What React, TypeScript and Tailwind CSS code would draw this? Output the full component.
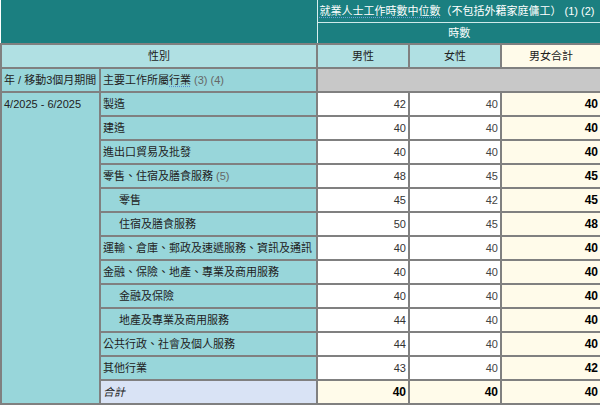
import React from "react";

type Row = { label: string; note?: string; indent?: boolean; m: number; f: number; t: number };

const rows: Row[] = [
  { label: "製造", m: 42, f: 40, t: 40 },
  { label: "建造", m: 40, f: 40, t: 40 },
  { label: "進出口貿易及批發", m: 40, f: 40, t: 40 },
  { label: "零售、住宿及膳食服務", note: "(5)", m: 48, f: 45, t: 45 },
  { label: "零售", indent: true, m: 45, f: 42, t: 45 },
  { label: "住宿及膳食服務", indent: true, m: 50, f: 45, t: 48 },
  { label: "運輸、倉庫、郵政及速遞服務、資訊及通訊", m: 40, f: 40, t: 40 },
  { label: "金融、保險、地產、專業及商用服務", m: 40, f: 40, t: 40 },
  { label: "金融及保險", indent: true, m: 40, f: 40, t: 40 },
  { label: "地產及專業及商用服務", indent: true, m: 44, f: 40, t: 40 },
  { label: "公共行政、社會及個人服務", m: 44, f: 40, t: 40 },
  { label: "其他行業", m: 43, f: 40, t: 42 },
];

const cell = "border-2 border-[#808080] p-0";

export default function App() {
  return (
    <div
      className="w-[600px] h-[406px] overflow-hidden bg-white text-[11px] leading-[14px] text-[#222]"
      style={{ fontFamily: '"Liberation Sans", Arial, "Noto Sans CJK TC", sans-serif' }}
    >
      <table className="table-fixed border-collapse w-[600px]">
        <colgroup>
          <col className="w-[99px]" />
          <col className="w-[217px]" />
          <col className="w-[92px]" />
          <col className="w-[92px]" />
          <col className="w-[100px]" />
        </colgroup>
        <tbody>
          <tr className="h-[22px]">
            <td colSpan={2} rowSpan={2} className="bg-[#1b7f80] border-r border-r-[#d8eeee] border-b-2 border-b-[#808080] p-0"></td>
            <td colSpan={3} className="bg-[#1b7f80] border-b border-b-[#cfeaea] text-white pl-[2px] whitespace-nowrap">
              <span className="underline decoration-dotted decoration-[#6aa0d8] underline-offset-2">就業人士工作時數中位數</span>（不包括外籍家庭傭工） (1) (2)
            </td>
          </tr>
          <tr className="h-[22px]">
            <td colSpan={3} className="bg-[#1b7f80] border-b-2 border-b-[#808080] text-white text-center">時數</td>
          </tr>
          <tr className="h-[24px]">
            <td colSpan={2} className={`${cell} bg-[#b0e0e3] text-center`}>性別</td>
            <td className={`${cell} bg-[#b0e0e3] text-center`}>男性</td>
            <td className={`${cell} bg-[#b0e0e3] text-center`}>女性</td>
            <td className={`${cell} bg-[#fffbea] text-center`}>男女合計</td>
          </tr>
          <tr className="h-[24px]">
            <td className={`${cell} bg-[#98d6da] pl-[2px] whitespace-nowrap`}>年 / 移動3個月期間</td>
            <td className={`${cell} bg-[#98d6da] pl-[2px]`}>
              主要工作所屬<span className="underline decoration-dotted decoration-[#5a8fd0] underline-offset-2">行業</span>{" "}
              <span className="text-[#666]">(3) (4)</span>
            </td>
            <td colSpan={3} className={`${cell} bg-[#c8c8c8]`}></td>
          </tr>
          {rows.map((r, i) => (
            <tr key={i} className="h-[24px]">
              {i === 0 && (
                <td rowSpan={13} className={`${cell} bg-[#98d6da] align-top pl-[2px] pt-[4px] whitespace-nowrap`}>
                  4/2025 - 6/2025
                </td>
              )}
              <td className={`${cell} bg-[#98d6da] whitespace-nowrap ${r.indent ? "pl-[18px]" : "pl-[2px]"}`}>
                {r.label}
                {r.note && <span className="text-[#666]"> {r.note}</span>}
              </td>
              <td className={`${cell} bg-white text-right pr-[2px] text-[#333]`}>{r.m}</td>
              <td className={`${cell} bg-white text-right pr-[2px] text-[#444]`}>{r.f}</td>
              <td className={`${cell} bg-[#fffbea] text-right pr-[2px] font-bold text-black text-[12px]`}>{r.t}</td>
            </tr>
          ))}
          <tr className="h-[24px]">
            <td className={`${cell} bg-[#d9e3f5] pl-[2px] italic`}>合計</td>
            <td className={`${cell} bg-[#fffbea] text-right pr-[2px] font-bold text-black text-[12px]`}>40</td>
            <td className={`${cell} bg-[#fffbea] text-right pr-[2px] font-bold text-black text-[12px]`}>40</td>
            <td className={`${cell} bg-[#fffbea] text-right pr-[2px] font-bold text-black text-[12px]`}>40</td>
          </tr>
        </tbody>
      </table>
    </div>
  );
}
